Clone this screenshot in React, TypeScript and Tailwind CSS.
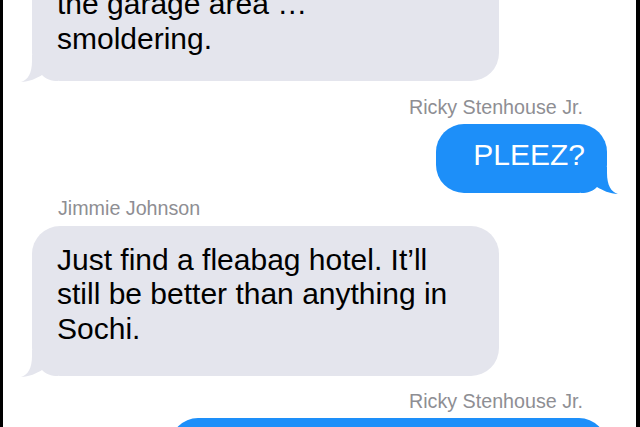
import type { ReactNode } from 'react';

type Side = 'left' | 'right';

function Tail({ side, color }: { side: Side; color: string }) {
  return (
    <svg
      width="40"
      height="30"
      viewBox="0 0 40 30"
      className={
        side === 'left'
          ? 'absolute left-[-12px] bottom-[-2px]'
          : 'absolute right-[-12px] bottom-[-2px] -scale-x-100'
      }
    >
      <path
        d="M12 2 L12 8 C12 20 8 27 1 29 C9 29 17 25 22 22 C26 26 31 28 38 28 L38 2 Z"
        fill={color}
      />
    </svg>
  );
}

function Label({ side, children }: { side: Side; children: ReactNode }) {
  return (
    <div
      className={`text-[19.7px] leading-[22px] text-[#8e8e93] ${
        side === 'left' ? 'pl-[55px] text-left' : 'pr-[53px] text-right'
      }`}
    >
      {children}
    </div>
  );
}

function Bubble({
  side,
  className = '',
  children,
}: {
  side: Side;
  className?: string;
  children?: ReactNode;
}) {
  const incoming = side === 'left';
  return (
    <div className={`flex ${incoming ? 'justify-start pl-[29px]' : 'justify-end pr-[29px]'}`}>
      <div
        className={`relative rounded-[28px] text-[30px] leading-[34.5px] max-w-[467px] ${
          incoming
            ? 'bg-[#e4e5ed] text-black pl-[25px] pr-[37px]'
            : 'bg-[#1d8ff9] text-white pl-[37px] pr-[22px]'
        } ${className}`}
      >
        <Tail side={side} color={incoming ? '#e4e5ed' : '#1d8ff9'} />
        <div className="relative">{children}</div>
      </div>
    </div>
  );
}

export default function App() {
  return (
    <div
      className="w-[640px] h-[427px] bg-black overflow-hidden pl-[3px] pr-[4px]"
      style={{ fontFamily: '"Liberation Sans", Arial, Helvetica, sans-serif' }}
    >
      <div className="h-full bg-white flex flex-col overflow-hidden">
        {/* first bubble runs off the top of the view */}
        <Bubble side="left" className="mt-[-28px] pt-[15px] pb-[25px] w-[467px]">
          the garage area …
          <br />
          smoldering.
        </Bubble>

        <div className="mt-[15px]">
          <Label side="right">Ricky Stenhouse Jr.</Label>
        </div>
        <div className="mt-[6px]">
          <Bubble side="right" className="pt-[14px] pb-[20px]">
            PLEEZ?
          </Bubble>
        </div>

        <div className="mt-[4px]">
          <Label side="left">Jimmie Johnson</Label>
        </div>
        <div className="mt-[7px]">
          <Bubble side="left" className="pt-[17px] pb-[30px]">
            Just find a fleabag hotel. It’ll still be better than anything in Sochi.
          </Bubble>
        </div>

        <div className="mt-[14px]">
          <Label side="right">Ricky Stenhouse Jr.</Label>
        </div>
        <div className="mt-[6px]">
          <Bubble side="right" className="w-[437px] h-[90px]" />
        </div>
      </div>
    </div>
  );
}
